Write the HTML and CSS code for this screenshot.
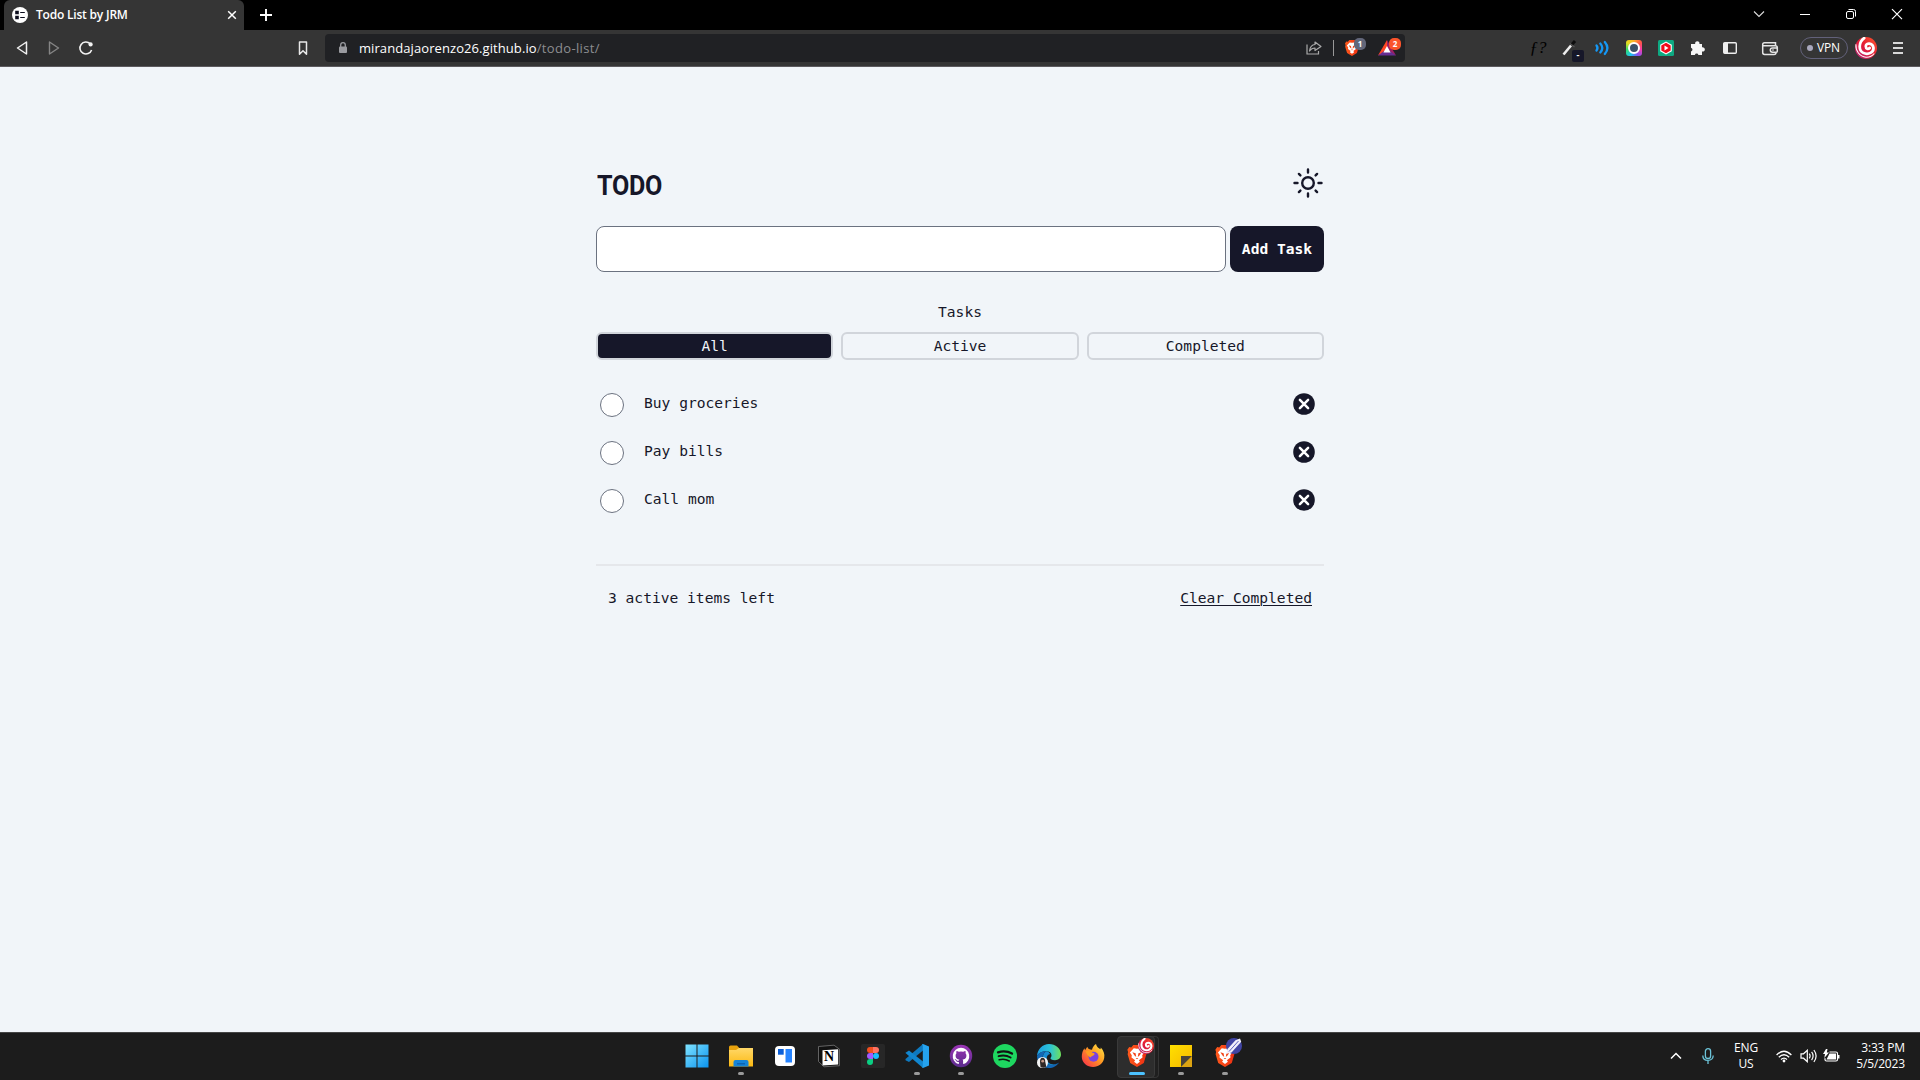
FILE: index.html
```html
<!DOCTYPE html>
<html lang="en">
<head>
<meta charset="utf-8">
<title>Todo List by JRM</title>
<link rel="stylesheet" href="styles.css">
</head>
<body>
<svg width="0" height="0" class="defs" aria-hidden="true">
  <defs>
    <linearGradient id="win" x1="0" y1="0" x2="1" y2="1"><stop offset="0" stop-color="#7fe3ff"/><stop offset="1" stop-color="#0a93ef"/></linearGradient>
    <linearGradient id="folder" x1="0" y1="0" x2="0" y2="1"><stop offset="0" stop-color="#ffd868"/><stop offset="1" stop-color="#fcb912"/></linearGradient>
    <linearGradient id="gh" x1="0" y1="0" x2="0" y2="1"><stop offset="0" stop-color="#9b35b5"/><stop offset="1" stop-color="#5b2c8c"/></linearGradient>
    <linearGradient id="edge" x1="0" y1="0" x2="1" y2="0"><stop offset="0" stop-color="#1b9de2"/><stop offset=".55" stop-color="#2cc3d5"/><stop offset="1" stop-color="#6fe05a"/></linearGradient>
    <linearGradient id="fox" x1="1" y1="0" x2="0" y2="1"><stop offset="0" stop-color="#fff04a"/><stop offset=".45" stop-color="#ff9a22"/><stop offset="1" stop-color="#f8234f"/></linearGradient>
    <linearGradient id="brave" x1="0" y1="0" x2="1" y2="0"><stop offset="0" stop-color="#ff5a1c"/><stop offset="1" stop-color="#ee2f12"/></linearGradient>
    <linearGradient id="swirl" x1="1" y1="0" x2="0" y2="1"><stop offset="0" stop-color="#ff5a2c"/><stop offset=".5" stop-color="#e31b35"/><stop offset="1" stop-color="#b02a80"/></linearGradient>
    <linearGradient id="note" x1="0" y1="0" x2="1" y2="1"><stop offset="0" stop-color="#ffe000"/><stop offset="1" stop-color="#f5b800"/></linearGradient>
    <symbol id="lion" viewBox="0 0 24 24">
      <path fill="url(#brave)" d="M8 0h8l2.300 2.600 2.200-.4 2 3-.8 2.300.5 2.500-2.800 9.500L12 24l-7.400-4.500L1.800 10l.5-2.500-.8-2.300 2-3 2.200.4z"/>
      <path fill="#fff" d="M12 4.200l3.500-.6 4.200 4.600-2 3 .3 2.300-4 3 1.200 1.800L12 20.800l-3.200-2.500L10 16.500l-4-3 .3-2.300-2-3 4.200-4.600z"/>
      <path fill="#f2451b" d="M7 8l3.500 1 .6 4L9 11.300zM17 8l-3.500 1-.6 4 2.100-1.700zM10.500 14.300h3L12 15.600z"/>
    </symbol>
    <symbol id="spiral" viewBox="0 0 24 24">
      <circle cx="12" cy="12" r="12" fill="url(#swirl)"/>
      <path d="M10 1.200C4 5.500 3.500 14.500 9 17.300s12-.8 11-6-8-5-8.200-1.500 2.700 3.800 4.200 2.200" fill="none" stroke="#fff" stroke-width="3" stroke-linecap="round"/>
      <path d="M1 8c-.5 7 4 13.500 11 14 4 .2 7-1.500 9-4" fill="none" stroke="#fff" stroke-width="1.100"/>
    </symbol>
    <symbol id="remove" viewBox="0 0 22 22">
      <circle cx="11" cy="11" r="10.800" fill="#161729"/>
      <path d="M6.900 6.900l8.200 8.200M15.100 6.900l-8.200 8.200" stroke="#fff" stroke-width="2.500" stroke-linecap="round"/>
    </symbol>
  </defs>
</svg>

<header class="titlebar">
  <div class="tab">
    <svg class="favicon" width="16" height="16" viewBox="0 0 16 16"><circle cx="8" cy="8" r="8" fill="#fff"/><path d="M3.200 3.700h3.600v3.600H3.200zM3.200 8.700h3.600v3.600H3.200z" fill="#0c0d1d"/><path d="M8.200 5.500h4.600M8.200 10.500h4.600" stroke="#0c0d1d" stroke-width="1.200"/></svg>
    <span class="tab-title">Todo List by JRM</span>
    <svg class="tab-close" width="10" height="10" viewBox="0 0 10 10"><path d="M1.200 1.200l7.600 7.600M8.800 1.200L1.200 8.800" stroke="#fff" stroke-width="1.500"/></svg>
  </div>
  <svg class="new-tab" width="14" height="14" viewBox="0 0 14 14"><path d="M7 1v12M1 7h12" stroke="#fff" stroke-width="1.900"/></svg>
  <div class="window-controls">
    <svg width="46" height="30" viewBox="0 0 46 30"><path d="M18 11.500l5 5 5-5" fill="none" stroke="#ddd" stroke-width="1.100"/></svg>
    <svg width="46" height="30" viewBox="0 0 46 30"><path d="M18 14.500h10" stroke="#fff"/></svg>
    <svg width="46" height="30" viewBox="0 0 46 30"><rect x="18.500" y="11.500" width="7" height="7" rx="1.500" fill="none" stroke="#fff"/><path d="M20.500 9.500h5a2 2 0 0 1 2 2v5" fill="none" stroke="#fff"/></svg>
    <svg width="46" height="30" viewBox="0 0 46 30"><path d="M18 9.200l10 10M28 9.200l-10 10" stroke="#fff" stroke-width="1.200"/></svg>
  </div>
</header>

<div class="toolbar">
  <div class="nav">
    <svg width="20" height="20" viewBox="0 0 20 20"><path d="M14.500 4v12L5.500 10z" fill="none" stroke="#f2f2f2" stroke-width="1.500" stroke-linejoin="round"/></svg>
    <svg width="20" height="20" viewBox="0 0 20 20"><path d="M5.500 4v12L14.500 10z" fill="none" stroke="#858585" stroke-width="1.400" stroke-linejoin="round"/></svg>
    <svg width="20" height="20" viewBox="0 0 20 20"><path d="M15.600 12a6 6 0 1 1-1.400-6.200" fill="none" stroke="#f2f2f2" stroke-width="1.600"/><circle cx="14.600" cy="6.400" r="2.100" fill="#f2f2f2"/></svg>
    <svg class="bookmark" width="20" height="20" viewBox="0 0 20 20"><path d="M6.500 4h7v12.300L10 12.700l-3.500 3.600z" fill="none" stroke="#e8e8e8" stroke-width="1.500" stroke-linejoin="round"/></svg>
  </div>
  <div class="address">
    <svg width="10" height="14" viewBox="0 0 10 14"><rect x="1" y="5.500" width="8" height="6.500" rx="1" fill="#9a9ba0"/><path d="M2.700 6V4a2.300 2.300 0 0 1 4.600 0v2" fill="none" stroke="#9a9ba0" stroke-width="1.300"/></svg>
    <span class="url"><span class="host">mirandajaorenzo26.github.io</span><span class="path">/todo-list/</span></span>
    <svg class="share" width="18" height="18" viewBox="0 0 18 18"><path d="M2 5.500v9.500h11.500v-3" fill="none" stroke="#aaa" stroke-width="1.200"/><path d="M10 3l6 4.500-6 4V9c-2.500 0-4 .8-5.500 3C5 8 7 5.700 10 5.500z" fill="none" stroke="#aaa" stroke-width="1.200" stroke-linejoin="round"/></svg>
    <span class="separator"></span>
    <span class="shield"><svg width="16" height="18"><use href="#lion"/></svg><b class="count">1</b></span>
    <span class="shield rewards"><svg width="18" height="16" viewBox="0 0 18 16"><path d="M9 0L0 15.500l9-4.500z" fill="#ff4724"/><path d="M9 0l9 15.500-9-4.500z" fill="#9e1f63"/><path d="M0 15.500h18L12 11H6z" fill="#662d91"/><path d="M9 6l3.600 6.500H5.400z" fill="#fff"/></svg><b class="count hot">2</b></span>
  </div>
  <div class="extensions">
    <span class="ext fx">ƒ?</span>
    <span class="ext pen"><svg width="20" height="20" viewBox="0 0 20 20"><path d="M3.500 16.500l7.500-9" stroke="#eee" stroke-width="2.600"/><path d="M11.500 7l3.500-4" stroke="#0d0d0d" stroke-width="3"/><path d="M10 5.500l4.500 3.500" stroke="#555" stroke-width="1.200"/></svg><b class="pen-badge">-</b></span>
    <svg class="ext" width="32" height="20" viewBox="0 0 32 20"><g fill="none" stroke="#1598f5" stroke-width="2.300" stroke-linecap="round"><path d="M10.500 7.500q2 2.500 0 5M14.300 5.500q4 4.500 0 9M18.800 4q5.200 6 0 12"/></g></svg>
    <span class="ext"><span class="camera"><i></i></span></span>
    <svg class="ext" width="32" height="20" viewBox="0 0 32 20"><rect x="8" y="2" width="16" height="16" rx="1.500" fill="#0ea982"/><path d="M16 3.500l5.800 3.300v6.400L16 16.500l-5.800-3.300V6.800z" fill="#fff"/><path d="M16 4.700l4.700 2.700v5.200L16 15.300l-4.700-2.700V7.400z" fill="#f00a1a"/><path d="M14.500 7.500l4 2.500-4 2.500z" fill="#fff"/></svg>
    <svg class="ext" width="32" height="20" viewBox="0 0 32 20"><path fill="#f6f6f6" d="M10 6h3.200a2.200 2.200 0 1 1 4.200 0H20v3.300a2.200 2.200 0 1 1 0 4.200V17h-3.600a1.800 1.800 0 0 0-3.500 0H9v-3.600a1.900 1.900 0 0 0 0-3.700V6z"/></svg>
    <svg class="ext" width="32" height="20" viewBox="0 0 32 20"><rect x="9.700" y="4.700" width="12.600" height="10.600" rx="1" fill="none" stroke="#eee" stroke-width="1.400"/><path d="M10 5h4v10h-4z" fill="#eee"/></svg>
    <svg class="ext wallet" width="32" height="20" viewBox="0 0 32 20"><g fill="none" stroke="#e5e5e5" stroke-width="1.500"><path d="M21.500 7.500V4.700H10.500a1.800 1.800 0 0 0-1.800 1.800v8a1.900 1.900 0 0 0 1.900 1.900H20a2 2 0 0 0 2-2"/><path d="M9 7.700h12.300a2 2 0 0 1 2 2v3.600a1 1 0 0 1-1 1h-3.800a2.200 2.200 0 0 1 0-4.400h4.500"/></g><circle cx="19" cy="12" r=".8" fill="#eee"/></svg>
    <span class="vpn"><i></i>VPN</span>
    <svg class="avatar" width="22" height="22"><use href="#spiral"/></svg>
    <svg class="menu" width="10" height="12" viewBox="0 0 10 12"><path d="M0 1h10M0 6h10M0 11h10" stroke="#d8d8d8" stroke-width="1.800"/></svg>
  </div>
</div>

<main class="page">
  <section class="todo">
    <div class="heading">
      <h1>TODO</h1>
      <svg width="30" height="30" viewBox="0 0 30 30"><g fill="none" stroke="#161729" stroke-width="2.400"><circle cx="15" cy="15" r="5.800"/><path stroke-linecap="round" d="M15 1.500v3M15 25.500v3M1.500 15h3M25.500 15h3M5.900 5.900l1.500 1.500M22.600 22.600l1.500 1.500M5.900 24.100l1.500-1.500M22.600 7.400l1.500-1.500"/></g></svg>
    </div>
    <form class="new-task">
      <input type="text" class="task-input" aria-label="New task">
      <button type="button" class="add">Add Task</button>
    </form>
    <p class="label">Tasks</p>
    <div class="filters">
      <button class="filter selected">All</button>
      <button class="filter">Active</button>
      <button class="filter">Completed</button>
    </div>
    <ul class="tasks">
      <li class="task"><span class="check"></span><span class="name">Buy groceries</span><svg width="22" height="22"><use href="#remove"/></svg></li>
      <li class="task"><span class="check"></span><span class="name">Pay bills</span><svg width="22" height="22"><use href="#remove"/></svg></li>
      <li class="task"><span class="check"></span><span class="name">Call mom</span><svg width="22" height="22"><use href="#remove"/></svg></li>
    </ul>
    <div class="summary">
      <span>3 active items left</span>
      <span class="clear">Clear Completed</span>
    </div>
  </section>
</main>

<footer class="taskbar">
  <div class="apps">
    <span class="app"><svg width="24" height="24" viewBox="0 0 24 24"><path fill="url(#win)" d="M.5.500h11v11H.5zM12.500.5h11v11h-11zM.5 12.500h11v11H.5zM12.500 12.500h11v11h-11z"/></svg></span>
    <span class="app running"><svg width="24" height="24" viewBox="0 0 24 24"><path fill="#e8a20c" d="M0 3a1.500 1.500 0 0 1 1.500-1.500H8l2.500 2.700L8 7H0z"/><path fill="url(#folder)" d="M0 6h7l3-2h14v18.500H0z"/><path fill="#1584d8" d="M4.500 22.500V18a2 2 0 0 1 2-2h11a2 2 0 0 1 2 2v4.500z"/><path fill="#0b5cab" d="M8 19.200h8v1.200H8z"/></svg></span>
    <span class="app"><svg width="24" height="24" viewBox="0 0 24 24"><rect x="2" y="2" width="20" height="20" rx="4" fill="#fff"/><path fill="#0b5fd8" d="M5 5h5.700v5.700H5z"/><path fill="#2684ff" d="M12.500 5H19v13.500h-6.500z"/></svg></span>
    <span class="app"><svg width="24" height="24" viewBox="0 0 24 24"><path d="M1.500 2.500L17 1.200l5.500 4v16.500L7 22.800 1.500 17.500z" fill="#111" stroke="#777" stroke-width=".8"/><path fill="#fff" d="M5.500 6.200l15.700-1v15.300l-15.700 1z"/></svg><b class="notion">N</b></span>
    <span class="app"><svg width="24" height="24" viewBox="0 0 24 24"><rect width="24" height="24" rx="2" fill="#272727"/><path fill="#f24e1e" d="M12 3H9a3 3 0 0 0 0 6h3z"/><path fill="#ff7262" d="M12 3h3a3 3 0 0 1 0 6h-3z"/><path fill="#a259ff" d="M12 9H9a3 3 0 0 0 0 6h3z"/><circle cx="15" cy="12" r="3" fill="#1abcfe"/><path fill="#0acf83" d="M12 15H9a3 3 0 1 0 3 3z"/></svg></span>
    <span class="app running"><svg width="24" height="24" viewBox="0 0 24 24"><path fill="#0e79bf" d="M18 0v6.500L4 18 .5 16.300v-1.200z"/><path fill="#1186cf" d="M.5 8.700L4 6.500 18 17.500V24L.5 8.900z"/><path fill="#25a3ee" d="M17 .4l1-.4 6 2.500v19L18 24l-1-1 .8-.5v-21z"/></svg></span>
    <span class="app running"><svg width="24" height="24" viewBox="0 0 24 24"><circle cx="12" cy="12" r="11.200" fill="url(#gh)"/><path fill="#fff" d="M12 3.800a8.400 8.400 0 0 0-2.700 16.300c.5.100.6-.2.600-.5v-1.700c-2.400.5-2.900-1.100-2.900-1.100-.4-1-1-1.300-1-1.300-.7-.5.100-.5.100-.5.900.1 1.300.9 1.300.9.800 1.300 2 .9 2.500.7 0-.5.300-.9.500-1.100-1.900-.2-3.800-.9-3.800-4 0-.9.300-1.700.9-2.300-.1-.2-.4-1.100.1-2.300 0 0 .7-.2 2.300.9a8 8 0 0 1 4.200 0c1.600-1.100 2.300-.9 2.300-.9.500 1.200.2 2.100.1 2.300.6.600.9 1.400.9 2.300 0 3.200-2 3.800-3.900 4 .4.300.6.800.6 1.600v2.500c0 .3.100.6.600.5A8.400 8.400 0 0 0 12 3.800z"/></svg></span>
    <span class="app"><svg width="24" height="24" viewBox="0 0 24 24"><circle cx="12" cy="12" r="12" fill="#1ed760"/><g fill="none" stroke="#121212" stroke-linecap="round"><path d="M5 8.300c4.500-1.300 10-1 14 1.300" stroke-width="2.300"/><path d="M5.600 12.200c4-1.100 8.500-.7 12 1.300" stroke-width="1.900"/><path d="M6.200 15.800c3.500-.9 7-.5 10 1.200" stroke-width="1.600"/></g></svg></span>
    <span class="app"><svg width="24" height="24" viewBox="0 0 24 24"><path fill="url(#edge)" d="M0 12C.5 5 5.500 0 12 0s12 4.500 12 10.500c0 3.500-2.700 5.700-6 5.700s-4.500-1.200-4.500-2c0-1 1-1 1-3 0-2.500-2.200-4-5-4C5 7.200 1.500 9 0 12z"/><path fill="#1267b5" d="M0 12c1.500-3.500 5-5 9.500-4.800-3 1.300-4.200 4-3.700 7.300C6.500 19 10 21 14 21c3.500 0 6-1 8-2.500C20 22 16 24 12 24 5 24 0 18.500 0 12z"/><path fill="#178bd3" d="M9.500 7.200C6 9 5 13 7 17s8 5.500 13.500 2.500C15 22 10 19 9.700 15c-.2-3 1.300-4.500 3.500-5-1-1.700-2-2.500-3.700-2.800z"/><circle cx="5.500" cy="18.500" r="5.500" fill="#f4f4f4"/><path fill="#302826" d="M3.500 23l-.5-5c0-3 1-4.200 2.600-4.200s2.700 1.200 2.700 4.200l1 4.500C8 24 5 24.300 3.500 23z"/><circle cx="5.700" cy="17.200" r="1.400" fill="#c99b88"/></svg></span>
    <span class="app"><svg width="24" height="24" viewBox="0 0 24 24"><path fill="url(#fox)" d="M15 0c.5 3 3 4.500 4.500 5.200l.3-1.700C22.500 6.500 24 10 23.200 14c-1 5.500-5.500 9-11.200 9S1 19 .8 13c-.1-3.500 1-6.500 2.700-8.700l.5 2 2.300-3.600C7 5 8.500 5.500 11 5.800 11.500 3.500 13 1 15 0z"/><circle cx="12.500" cy="12.800" r="5" fill="#7a42e0"/><path fill="#ff9b20" d="M4.500 7.500c3-1.500 5.500-.5 7 1.200 2 .2 2.700 1 1.500 2.200-1.500 1.200-3 1.100-3.500 2.600C8 13 6 10.500 4.500 7.500z"/></svg></span>
    <span class="app active"><svg width="22" height="24"><use href="#lion"/></svg><svg class="profile" width="16" height="16"><use href="#spiral"/></svg></span>
    <span class="app running"><svg width="22" height="22" viewBox="0 0 22 22"><path fill="url(#note)" d="M0 0h22v11L11 22H0z"/><path fill="#494438" d="M11 11h11L11 22z"/><path fill="#dca413" d="M22 11v11H11z"/></svg></span>
    <span class="app running"><svg width="22" height="24"><use href="#lion"/></svg><svg class="profile" width="17" height="16" viewBox="0 0 17 16"><circle cx="9" cy="8" r="8" fill="#4145a4"/><path d="M1 16L2.500 11 10.500 2.200l4.500-1.700 1.200 3.300L6.500 14.500z" fill="#f1eefa"/><path d="M4 13.500L13.500 3" stroke="#5a5fc0" stroke-width="1"/></svg></span>
  </div>
  <div class="tray">
    <svg class="chevron" width="12" height="8" viewBox="0 0 12 8"><path d="M1 6.500l5-5 5 5" fill="none" stroke="#fff" stroke-width="1.500"/></svg>
    <svg class="mic" width="12" height="16" viewBox="0 0 12 16"><g fill="none" stroke="#6cc3d8" stroke-width="1.300"><rect x="3.400" y=".7" width="5.200" height="9.800" rx="2.600"/><path d="M.8 7.500c0 3 2.200 4.900 5.200 4.900s5.200-1.900 5.200-4.900M6 12.400V16"/></g></svg>
    <div class="lang"><span>ENG</span><span>US</span></div>
    <svg class="wifi" width="16" height="13" viewBox="0 0 16 13"><g fill="none" stroke="#fff" stroke-width="1.300"><path d="M.6 5Q8-2.500 15.400 5M2.800 7.300q5.200-5 10.400 0M5 9.500q3-2.700 6 0"/></g><circle cx="8" cy="11" r="1.400" fill="#fff"/></svg>
    <svg class="sound" width="17" height="14" viewBox="0 0 17 14"><g fill="none" stroke="#fff" stroke-width="1.200"><path d="M1 4.800h2.500L7.300 1.300v11.400L3.500 9.200H1z"/><path d="M9.300 4.700q1.600 2.300 0 4.600M11.600 2.900q3 4.100 0 8.200M13.900 1q4.400 6 0 12"/></g></svg>
    <svg class="battery" width="17" height="14" viewBox="0 0 17 14"><path d="M6.500 3H13a1.500 1.500 0 0 1 1.500 1.500v6A1.500 1.500 0 0 1 13 12H3.500A1.500 1.500 0 0 1 2 10.500V9.300" fill="none" stroke="#fff" stroke-width="1.200"/><path d="M6.500 4.500H13v6H3.500z" fill="#fff"/><path d="M15 6h1.500v3.500H15zM3 0L0 5h2L1.300 9 6 3.500H3.800L4.500 0z" fill="#fff"/></svg>
    <div class="clock"><span>3:33 PM</span><span>5/5/2023</span></div>
  </div>
</footer>
</body>
</html>
```
FILE: styles.css
```css
* { box-sizing: border-box; }

body {
  margin: 0;
  width: 1920px;
  height: 1080px;
  overflow: hidden;
  display: flex;
  flex-direction: column;
  background: #f1f5f9;
  color: #161729;
  font-family: "Open Sans", "Noto Sans", sans-serif;
}

svg { display: block; flex: none; }
.defs { position: absolute; }

/* Browser window */
.titlebar {
  height: 30px;
  flex: none;
  display: flex;
  align-items: center;
  padding-left: 4px;
  background: #000;
}
.tab {
  width: 240px;
  height: 30px;
  display: flex;
  align-items: center;
  padding: 0 7px 0 8px;
  background: #353535;
  border-radius: 6px 6px 0 0;
  color: #fff;
}
.tab-title {
  flex: 1;
  margin-left: 8px;
  font-size: 12px;
  font-weight: 600;
  letter-spacing: -0.2px;
  line-height: 30px;
}
.new-tab { margin: 0 0 0 15px; }
.window-controls { display: flex; margin-left: auto; }

.toolbar {
  height: 37px;
  flex: none;
  display: flex;
  align-items: center;
  background: #353535;
  border-bottom: 1px solid #5c5a5e;
}
.nav {
  width: 325px;
  display: flex;
  gap: 12px;
  padding: 0 12px;
}
.bookmark { margin-left: auto; }
.address {
  width: 1080px;
  height: 28px;
  display: flex;
  align-items: center;
  padding: 0 3px 0 13px;
  background: #202124;
  border-radius: 4px;
}
.url {
  flex: 1;
  margin-left: 11px;
  font-size: 13px;
  color: #fff;
  white-space: nowrap;
}
.path { color: #8d8e91; letter-spacing: 0.35px; }
.host { letter-spacing: 0.08px; }
.separator {
  width: 1px;
  height: 16px;
  margin: 0 10px;
  background: #999;
}
.shield { position: relative; width: 24px; margin-right: 10px; }
.rewards { width: 24px; margin-right: 0; }
.count {
  position: absolute;
  left: 10px;
  top: -1px;
  width: 12px;
  height: 12px;
  border-radius: 5px;
  background: #63677a;
  color: #fff;
  font-size: 8px;
  line-height: 12px;
  text-align: center;
}
.hot { left: 11px; top: -2px; background: #fb542b; }

.extensions {
  flex: 1;
  display: flex;
  align-items: center;
  padding-left: 117px;
}
.ext { width: 32px; flex: none; display: flex; justify-content: center; }
.fx { font: italic 17px/20px "Liberation Serif", serif; color: #000; }
.pen { position: relative; }
.pen-badge {
  position: absolute;
  left: 18px;
  top: 12px;
  width: 12px;
  height: 12px;
  border-radius: 2px;
  background: #161729;
  color: #fff;
  font-size: 9px;
  line-height: 10px;
  text-align: center;
}
.camera {
  width: 16px;
  height: 16px;
  display: flex;
  align-items: center;
  justify-content: center;
  border-radius: 3px;
  background: conic-gradient(#ffb02a, #ff534a, #f43cae, #8054f5, #1cc5ef, #31de68, #e7dc20, #ffb02a);
}
.camera i {
  width: 12px;
  height: 12px;
  border-radius: 50%;
  border: 2px solid #fff;
  background: #3b5268;
}
.wallet { margin-left: 8px; }
.vpn {
  width: 48px;
  height: 22px;
  margin-left: 14px;
  display: flex;
  align-items: center;
  gap: 4px;
  padding: 0 0 1px 6px;
  border: 1px solid #62617a;
  border-radius: 11px;
  color: #fff;
  font-size: 12px;
  letter-spacing: -0.2px;
}
.vpn i { width: 6px; height: 6px; border-radius: 50%; background: #a9a8bd; }
.avatar { margin-left: 7px; }
.menu { margin-left: 16px; }

/* Todo page */
.page { flex: 1; display: flex; justify-content: center; background: #f1f5f9; }
.todo {
  width: 728px;
  padding-top: 101px;
  font: 14.6px/24px "DejaVu Sans Mono", monospace;
}
.heading { display: flex; justify-content: space-between; height: 58px; padding-right: 1px; }
h1 {
  margin: 0 0 0 1px;
  font: 700 27px/37px Roboto, sans-serif;
  letter-spacing: -0.3px;
  transform: scaleX(0.93);
  transform-origin: left;
}
.new-task { display: flex; gap: 4px; height: 46px; }
.task-input {
  flex: 1;
  border: 1px solid #6b7280;
  border-radius: 8px;
  background: #fff;
}
.add {
  width: 94px;
  padding: 0;
  border: 0;
  border-radius: 8px;
  background: #161729;
  color: #fff;
  font: inherit;
  font-weight: 700;
}
.label { margin: 28px 0 8px; text-align: center; }
.filters { display: grid; grid-template-columns: repeat(3, 1fr); gap: 8px; }
.filter {
  height: 28px;
  padding: 0;
  border: 2px solid #d1d5db;
  border-radius: 6px;
  background: transparent;
  color: #161729;
  font: inherit;
}
.selected { background: #161729; color: #f1f5f9; }
.tasks { list-style: none; margin: 21px 0 0; padding: 0; height: 183px; }
.task {
  height: 48px;
  display: flex;
  align-items: center;
  padding: 0 9px 0 4px;
}
.check {
  width: 24px;
  height: 24px;
  border: 1px solid #6b7280;
  border-radius: 50%;
  background: #fff;
}
.name { flex: 1; margin-left: 20px; padding-bottom: 5px; }
.task svg { margin-bottom: 2px; }
.summary {
  display: flex;
  justify-content: space-between;
  padding: 20px 12px 0;
  border-top: 2px solid #e5e7eb;
}
.clear { text-decoration: underline; text-decoration-thickness: 1px; text-underline-offset: 2px; }

/* Taskbar */
.taskbar {
  height: 48px;
  flex: none;
  display: flex;
  justify-content: space-between;
  padding: 0 15px 0 675px;
  background: #1c1c1c;
  border-top: 1px solid #454545;
  color: #fff;
}
.apps { display: flex; }
.app {
  position: relative;
  width: 44px;
  height: 47px;
  display: flex;
  align-items: center;
  justify-content: center;
  padding-bottom: 1px;
}
.app.running::after, .app.active::after {
  content: "";
  position: absolute;
  bottom: 5px;
  left: 19px;
  width: 6px;
  height: 3px;
  border-radius: 2px;
  background: #9a9a9a;
}
.app.active::after { left: 14px; width: 16px; background: #4cc2ff; }
.app.active::before {
  content: "";
  position: absolute;
  left: 2px;
  top: 3px;
  width: 36px;
  height: 40px;
  border: 1px solid #3a3a3a;
  border-radius: 4px;
  background: #2d2d2d;
  box-shadow: 4px 0 0 -1px #1f1f1f, 4px 0 0 0 #343434;
}
.app.active svg { position: relative; }
.app .profile, .app.active .profile { position: absolute; right: 5px; top: 5px; }
.notion {
  position: absolute;
  left: 17px;
  top: 15px;
  color: #000;
  font: bold 14px/18px "Liberation Serif", serif;
}
.tray { display: flex; align-items: center; font-size: 12px; line-height: 16px; letter-spacing: -0.15px; padding-bottom: 1px; }
.tray > .chevron { margin-right: 20px; }
.tray > .mic { margin-right: 18px; }
.lang, .clock { display: flex; flex-direction: column; }
.lang { align-items: center; width: 28px; margin-right: 16px; }
.tray > .wifi { margin-right: 8px; }
.tray > .sound { margin-right: 6px; }
.tray > .battery { margin-right: 15px; }
.clock { align-items: flex-end; width: 50px; white-space: nowrap; }
```
